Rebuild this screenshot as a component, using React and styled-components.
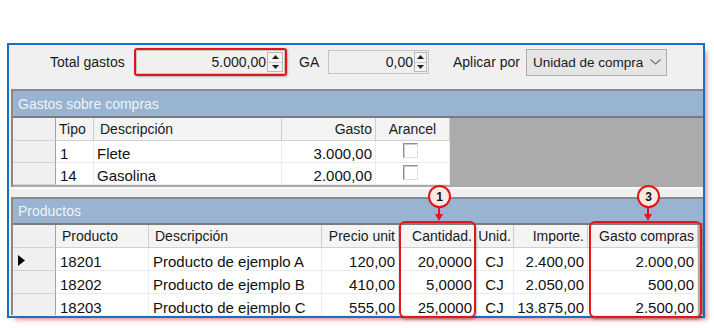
import React from "react";
import styled, { createGlobalStyle } from "styled-components";

const Global = createGlobalStyle`
  html, body { margin: 0; padding: 0; background: #ffffff; }
  body { font-family: "Liberation Sans", Arial, sans-serif; color: #1a1a1a; }
`;

const Page = styled.div`
  width: 714px;
  height: 330px;
  padding: 43px 0 0 7px;
  box-sizing: border-box;
  overflow: hidden;
`;

const Frame = styled.div`
  position: relative;
  width: 698px;
  height: 275px;
  box-sizing: border-box;
  border: 2px solid #1670c6;
  background: #f0f0f0;
  display: flex;
  flex-direction: column;
  box-shadow: 5px 5px 4px -3px rgba(235, 50, 50, 0.55);
`;

const Toolbar = styled.div`
  height: 44px;
  flex: none;
  display: flex;
  align-items: center;
  padding: 0 0 10px 41px;
  box-sizing: border-box;
  font-size: 14px;
`;

const Label = styled.div`
  width: ${(p) => p.$w}px;
  margin-left: ${(p) => p.$ml || 0}px;
  white-space: nowrap;
  flex: none;
`;

const Highlight = styled.div`
  width: 153px;
  height: 28px;
  box-sizing: border-box;
  border: 2px solid #e3151a;
  border-radius: 3px;
  display: flex;
  box-shadow: 1px 1px 2px rgba(0, 0, 0, 0.25);
  flex: none;
`;

const NumberField = styled.div`
  width: ${(p) => p.$w}px;
  height: ${(p) => p.$h}px;
  box-sizing: border-box;
  border: 1px solid #c4c4c4;
  background: #f0f0f0;
  display: flex;
  align-items: center;
  flex: none;
`;

const FieldText = styled.div`
  flex: 1;
  text-align: right;
  padding-right: 1px;
  white-space: nowrap;
`;

const Spinner = styled.div`
  width: ${(p) => p.$w}px;
  height: 20px;
  box-sizing: border-box;
  border: 1px solid #b9b9b9;
  background: #f4f4f4;
  display: flex;
  flex-direction: column;
  margin-right: 1px;
  flex: none;
`;

const SpinHalf = styled.div`
  flex: 1;
  display: flex;
  align-items: center;
  justify-content: center;
  border-top: ${(p) => (p.$bottom ? "1px solid #c8c8c8" : "none")};
`;

const Arrow = ({ down }) => (
  <svg width="7" height="4" viewBox="0 0 7 4">
    <polygon points={down ? "0,0 7,0 3.5,4" : "0,4 7,4 3.5,0"} fill="#202020" />
  </svg>
);

const Combo = styled.div`
  width: 141px;
  height: 27px;
  box-sizing: border-box;
  border: 1px solid #adadad;
  background: #e5e5e5;
  display: flex;
  align-items: center;
  justify-content: space-between;
  padding: 0 5px 0 6px;
  font-size: 13.5px;
  white-space: nowrap;
  flex: none;
`;

const Panel = styled.div`
  height: ${(p) => p.$h}px;
  margin-left: 2px;
  flex: none;
  box-sizing: border-box;
  background: #ababab;
  border-top: 2px solid #8a8a8a;
  border-left: 2px solid #8a8a8a;
  display: flex;
  flex-direction: column;
  overflow: hidden;
`;

const Caption = styled.div`
  height: ${(p) => p.$h}px;
  flex: none;
  background: #99b4d1;
  color: #eef3f9;
  font-size: 14px;
  padding-left: 5px;
  display: flex;
  align-items: center;
  border-bottom: 2px solid #7c7c7c;
`;

const Splitter = styled.div`
  height: 10px;
  flex: none;
  background: #f0f0f0;
  border-top: 2px solid #fafafa;
  box-sizing: border-box;
`;

const GridRow = styled.div`
  display: grid;
  grid-template-columns: ${(p) => p.$cols};
  height: ${(p) => p.$h}px;
  width: max-content;
  flex: none;
`;

const Selector = styled.div`
  background: #f0f0f0;
  border-right: 1px solid #a3a3a3;
  border-bottom: 1px solid #d2d2d2;
  display: flex;
  align-items: center;
  padding-left: 5px;
  padding-top: 2px;
`;

const HeadCell = styled.div`
  background: #f4f4f4;
  border-right: 1px solid #cdcdcd;
  border-bottom: 1px solid #d0d0d0;
  display: flex;
  align-items: center;
  justify-content: ${(p) => p.$align || "flex-start"};
  padding: 0 ${(p) => (p.$align === "flex-end" ? 3 : 0)}px 0 ${(p) => (p.$pl != null ? p.$pl : 6)}px;
  font-size: 14px;
  white-space: nowrap;
  overflow: hidden;
  color: #1a1a1a;
`;

const Cell = styled.div`
  background: #ffffff;
  border-right: 1px solid #ececec;
  border-bottom: 1px solid #ececec;
  display: flex;
  align-items: center;
  justify-content: ${(p) => p.$align || "flex-start"};
  padding: 4px ${(p) => (p.$align === "flex-end" ? 3 : 0)}px 0 ${(p) => (p.$align === "flex-start" || !p.$align ? (p.$pl != null ? p.$pl : 4) : 0)}px;
  font-size: 15px;
  white-space: nowrap;
  overflow: hidden;
  color: #111;
`;

const CheckCell = styled(Cell)`
  padding: 0;
  justify-content: center;
`;

const Check = styled.div`
  width: 15px;
  height: 15px;
  box-sizing: border-box;
  background: #fff;
  border: 1px solid;
  border-color: #8f8f8f #dedede #dedede #8f8f8f;
  box-shadow: inset 1px 1px 0 #cfcfcf;
  margin-left: -4px;
  margin-top: -3px;
`;

const ColumnBox = styled.div`
  position: absolute;
  left: ${(p) => p.$x}px;
  top: 176px;
  width: ${(p) => p.$w}px;
  height: 97px;
  box-sizing: border-box;
  border: 2px solid #e3151a;
  border-radius: 6px;
  box-shadow: 1px 2px 2px rgba(0, 0, 0, 0.25);
  pointer-events: none;
`;

const Bubble = styled.div`
  position: absolute;
  left: ${(p) => p.$x}px;
  top: 140px;
  width: 23px;
  height: 23px;
  box-sizing: border-box;
  border: 2px solid #e3151a;
  border-radius: 50%;
  background: #fdeae2;
  display: flex;
  align-items: center;
  justify-content: center;
  font-size: 12px;
  font-weight: bold;
  color: #111;
`;

const Pointer = styled.svg`
  position: absolute;
  left: ${(p) => p.$x}px;
  top: 163px;
`;

const DownPointer = ({ x }) => (
  <Pointer $x={x} width="10" height="13" viewBox="0 0 10 13">
    <line x1="5" y1="0" x2="5" y2="7" stroke="#e3151a" strokeWidth="2" />
    <polygon points="1,6 9,6 5,13" fill="#e3151a" />
  </Pointer>
);

const gastosCols = "43px 38px 188px 94px 74px";
const prodCols = "43px 93px 173px 77px 77px 38px 74px 110px";

const gastos = [
  { tipo: "1", desc: "Flete", gasto: "3.000,00" },
  { tipo: "14", desc: "Gasolina", gasto: "2.000,00" },
];

const productos = [
  { p: "18201", d: "Producto de ejemplo A", pu: "120,00", c: "20,0000", u: "CJ", i: "2.400,00", g: "2.000,00" },
  { p: "18202", d: "Producto de ejemplo B", pu: "410,00", c: "5,0000", u: "CJ", i: "2.050,00", g: "500,00" },
  { p: "18203", d: "Producto de ejemplo C", pu: "555,00", c: "25,0000", u: "CJ", i: "13.875,00", g: "2.500,00" },
];

const RowMarker = () => (
  <svg width="7" height="11" viewBox="0 0 7 11">
    <polygon points="0,0 7,5.5 0,11" fill="#000" />
  </svg>
);

export default function App() {
  return (
    <Page>
      <Global />
      <Frame>
        <Toolbar>
          <Label $w={84}>Total gastos</Label>
          <Highlight>
            <NumberField $w={149} $h={24}>
              <FieldText>5.000,00</FieldText>
              <Spinner $w={16}>
                <SpinHalf><Arrow /></SpinHalf>
                <SpinHalf $bottom><Arrow down /></SpinHalf>
              </Spinner>
            </NumberField>
          </Highlight>
          <Label $w={29} $ml={12}>GA</Label>
          <NumberField $w={101} $h={24}>
            <FieldText>0,00</FieldText>
            <Spinner $w={13}>
              <SpinHalf><Arrow /></SpinHalf>
              <SpinHalf $bottom><Arrow down /></SpinHalf>
            </Spinner>
          </NumberField>
          <Label $w={73} $ml={24}>Aplicar por</Label>
          <Combo>
            <span>Unidad de compra</span>
            <svg width="11" height="6" viewBox="0 0 11 6">
              <polyline points="0.5,0.5 5.5,5 10.5,0.5" fill="none" stroke="#707070" strokeWidth="1.1" />
            </svg>
          </Combo>
        </Toolbar>

        <Panel $h={98}>
          <Caption $h={25}>Gastos sobre compras</Caption>
          <GridRow $cols={gastosCols} $h={23}>
            <Selector />
            <HeadCell $pl={3}>Tipo</HeadCell>
            <HeadCell>Descripción</HeadCell>
            <HeadCell $align="flex-end">Gasto</HeadCell>
            <HeadCell $align="center" $pl={0}>Arancel</HeadCell>
          </GridRow>
          {gastos.map((r) => (
            <GridRow key={r.tipo} $cols={gastosCols} $h={22}>
              <Selector />
              <Cell>{r.tipo}</Cell>
              <Cell $pl={3}>{r.desc}</Cell>
              <Cell $align="flex-end">{r.gasto}</Cell>
              <CheckCell><Check /></CheckCell>
            </GridRow>
          ))}
        </Panel>

        <Splitter />

        <Panel $h={118}>
          <Caption $h={24}>Productos</Caption>
          <GridRow $cols={prodCols} $h={23}>
            <Selector />
            <HeadCell>Producto</HeadCell>
            <HeadCell>Descripción</HeadCell>
            <HeadCell $align="flex-end">Precio unit</HeadCell>
            <HeadCell $align="flex-end">Cantidad.</HeadCell>
            <HeadCell $align="center" $pl={0}>Unid.</HeadCell>
            <HeadCell $align="flex-end">Importe.</HeadCell>
            <HeadCell $align="flex-end">Gasto compras</HeadCell>
          </GridRow>
          {productos.map((r, i) => (
            <GridRow key={r.p} $cols={prodCols} $h={23}>
              <Selector>{i === 0 ? <RowMarker /> : null}</Selector>
              <Cell>{r.p}</Cell>
              <Cell>{r.d}</Cell>
              <Cell $align="flex-end">{r.pu}</Cell>
              <Cell $align="flex-end">{r.c}</Cell>
              <Cell $align="center">{r.u}</Cell>
              <Cell $align="flex-end">{r.i}</Cell>
              <Cell $align="flex-end">{r.g}</Cell>
            </GridRow>
          ))}
        </Panel>

        <ColumnBox $x={390} $w={77} />
        <ColumnBox $x={580} $w={113} />
        <Bubble $x={419}>1</Bubble>
        <DownPointer x={425} />
        <Bubble $x={628}>3</Bubble>
        <DownPointer x={634} />
      </Frame>
    </Page>
  );
}
